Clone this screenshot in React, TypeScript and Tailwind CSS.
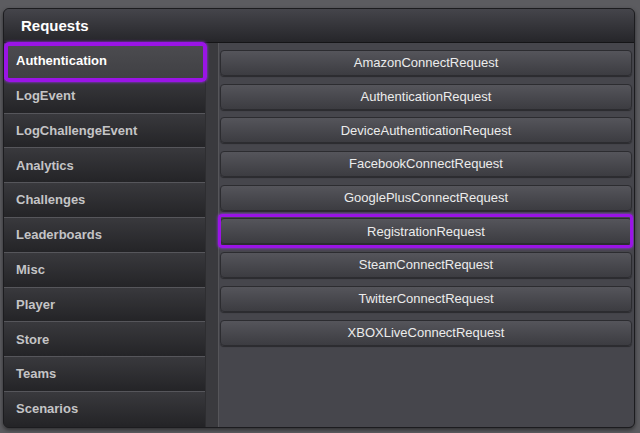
import React from 'react';

const categories = [
  "Authentication",
  "LogEvent",
  "LogChallengeEvent",
  "Analytics",
  "Challenges",
  "Leaderboards",
  "Misc",
  "Player",
  "Store",
  "Teams",
  "Scenarios",
];

const requests = [
  "AmazonConnectRequest",
  "AuthenticationRequest",
  "DeviceAuthenticationRequest",
  "FacebookConnectRequest",
  "GooglePlusConnectRequest",
  "RegistrationRequest",
  "SteamConnectRequest",
  "TwitterConnectRequest",
  "XBOXLiveConnectRequest",
];

export default function App() {
  return (
    <div
      className="w-[640px] h-[433px] bg-[#5c5c60] pt-[8px] pl-[3px] overflow-hidden"
      style={{ fontFamily: '"Liberation Sans", Arial, sans-serif' }}
    >
      <div className="w-[632px] h-[420px] rounded-[6px] overflow-hidden flex flex-col bg-[#2a2a2e] border border-[#1c1c1f] shadow-[0_2px_4px_rgba(0,0,0,0.5)]">
        {/* header */}
        <div className="h-[34px] shrink-0 flex items-center pl-[17px] pt-[2px] bg-gradient-to-b from-[#45454b] to-[#26262a] border-b border-[#151517]">
          <span className="text-white font-bold text-[15px]">Requests</span>
        </div>

        <div className="flex flex-1 min-h-0">
          {/* sidebar */}
          <div className="w-[201px] shrink-0 flex flex-col bg-[#242427]">
            {categories.map((c, i) => (
              <div
                key={c}
                className={`relative h-[34.8px] flex items-center pl-[12px] border-t ${
                  i === 0
                    ? "border-[#3a3a3e] bg-gradient-to-b from-[#4c4c50] to-[#404044] text-white"
                    : "border-[#56565b] bg-gradient-to-b from-[#39393d] to-[#242427] text-[#c4c4c6]"
                }`}
              >
                <span className="font-bold text-[13px]">{c}</span>
                {i === 0 && (
                  <div className="absolute z-10 left-0 -top-[2px] -right-[2px] -bottom-[4px] rounded-[5px] border-[4px] border-[#9a14e6] shadow-[0_0_3px_#a030ff]" />
                )}
              </div>
            ))}
          </div>

          {/* divider strip */}
          <div className="w-[14px] shrink-0 bg-[#3a3a3e] border-l border-[#2e2e31] border-r border-r-[#56565a]" />

          {/* content */}
          <div className="flex-1 bg-[#46464c] pl-[1px] pr-[2px] pt-[7px] flex flex-col gap-[7.7px]">
            {requests.map((r) => (
              <div
                key={r}
                className="relative h-[26px] shrink-0 rounded-[4px] flex items-center justify-center bg-gradient-to-b from-[#55555b] to-[#3c3c41] border border-[#2c2c30] shadow-[0_1px_1px_rgba(0,0,0,0.4)]"
              >
                <span className="text-[#ececec] text-[13px]">{r}</span>
                {r === "RegistrationRequest" && (
                  <div className="absolute z-10 -left-[3px] -top-[5px] -right-[2px] -bottom-[5px] rounded-[4px] border-[3px] border-[#9a14e6] shadow-[0_0_3px_#a030ff]" />
                )}
              </div>
            ))}
          </div>
        </div>
      </div>
    </div>
  );
}
